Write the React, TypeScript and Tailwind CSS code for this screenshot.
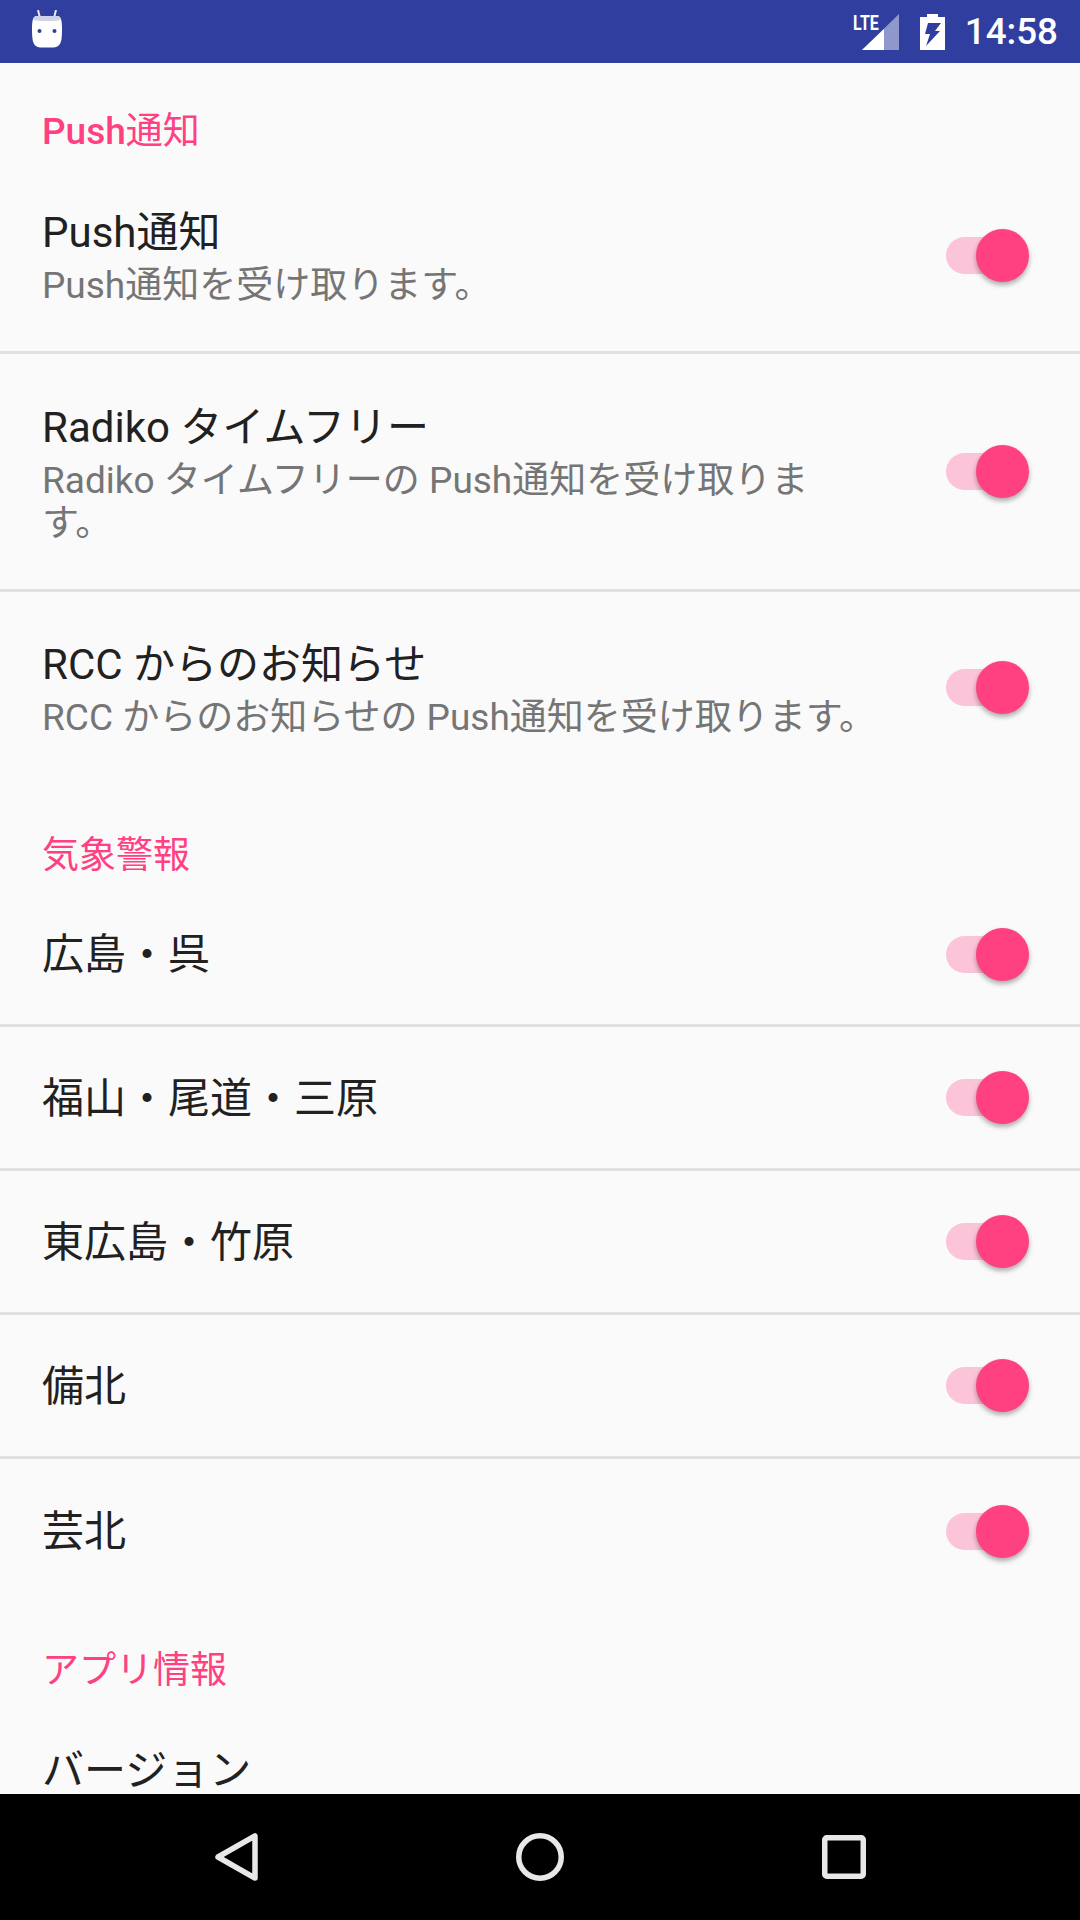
import type { ReactNode } from "react";

const FONT = "font-['Roboto','Noto_Sans_CJK_JP',sans-serif]";

function Toggle() {
  return (
    <div className="relative h-[37px] w-[83px] shrink-0">
      <div className="absolute left-0 top-0 h-[37px] w-[66px] rounded-full bg-[#fbc4d8]" />
      <div className="absolute left-[30px] top-[-8px] h-[53px] w-[53px] rounded-full bg-[#ff4081] shadow-[0_3px_5px_rgba(0,0,0,0.32)]" />
    </div>
  );
}

function SectionHeader({ children, className }: { children: ReactNode; className: string }) {
  return <div className={`pl-[42px] text-[37px] leading-[44px] text-[#ff4081] ${className}`}>{children}</div>;
}

function Row({
  title,
  summary,
  className,
  divider = true,
}: {
  title: string;
  summary?: ReactNode;
  className: string;
  divider?: boolean;
}) {
  return (
    <div className={`flex items-center pl-[42px] pr-[51px] ${divider ? "border-b-[3px] border-[#e1e1e1]" : ""} ${className}`}>
      <div className="min-w-0 flex-1 pt-[2px]">
        <div className="text-[42px] leading-[54px] text-[#212121]">{title}</div>
        {summary && <div className="mt-[4px] text-[37px] leading-[43px] text-[#757575]">{summary}</div>}
      </div>
      <Toggle />
    </div>
  );
}

function StatusBar() {
  return (
    <div className="flex h-[63px] shrink-0 items-center bg-[#303f9f] pl-[32px] pr-[22px]">
      <svg width="30" height="38" viewBox="0 0 30 38" className="mb-[6px]">
        <path d="M6 0l2 8M24 0l-2 8" stroke="#e8e9f4" strokeWidth="2" />
        <path d="M5 6h20c3 0 4 2 4.500 5 .7 4 .7 12 0 18-.5 5-3 8-8 8.500H8.500c-5-.5-7.500-3.500-8-8.500-.7-6-.7-14 0-18C1 8 2 6 5 6z" fill="#fff" />
        <path d="M5 6h20c2 0 3 1 4 3.500-2 2-26 2-28 0C2 7 3 6 5 6z" fill="#cfd2e8" />
        <circle cx="7.500" cy="21" r="2" fill="#303f9f" />
        <circle cx="22.500" cy="21" r="2" fill="#303f9f" />
      </svg>
      <div className="flex-1" />
      <div className="relative h-[36px] w-[37px]">
        <svg width="37" height="36" viewBox="0 0 37 36" className="block">
          <path d="M0 36L37 0v36z" fill="#8f98cd" />
          <path d="M0 36L22 15v21z" fill="#fff" />
        </svg>
        <span className="absolute left-[-9px] top-[-1px] origin-left scale-x-[0.8] text-[20px] font-bold leading-[20px] text-white">LTE</span>
      </div>
      <svg width="25" height="36" viewBox="0 0 25 36" className="ml-[21px]">
        <path d="M7 0h11v3h7v33H0V3h7z" fill="#fff" />
        <path d="M8 9h13l-6 8h5L6 32l4-12H5z" fill="#303f9f" />
      </svg>
      <span className="ml-[20px] text-[36.750px] font-medium leading-[44px] text-white">14:58</span>
    </div>
  );
}

function NavBar() {
  return (
    <div className="flex h-[126px] shrink-0 items-center bg-black pl-[215px] pr-[214px]">
      <div className="flex w-full items-center justify-between">
        <svg width="43" height="48" viewBox="0 0 43 48">
          <path d="M40 3v42L3 24z" fill="none" stroke="#e8e8e8" strokeWidth="5.500" strokeLinejoin="round" />
        </svg>
        <svg width="48" height="48" viewBox="0 0 48 48">
          <circle cx="24" cy="24" r="21.250" fill="none" stroke="#e8e8e8" strokeWidth="5.500" />
        </svg>
        <svg width="44" height="44" viewBox="0 0 44 44">
          <rect x="2.750" y="2.750" width="38.500" height="38.500" rx="2" fill="none" stroke="#e8e8e8" strokeWidth="5.500" />
        </svg>
      </div>
    </div>
  );
}

export default function App() {
  return (
    <div className={`relative flex h-[1920px] w-[1080px] flex-col overflow-hidden bg-[#fafafa] ${FONT}`}>
      <StatusBar />
      <div className="min-h-0 flex-1 overflow-hidden">
        <SectionHeader className="pt-[47px]">
          <span className="font-medium">Push</span>通知
        </SectionHeader>
        <Row title="Push通知" summary="Push通知を受け取ります。" className="h-[200px] pt-[6px]" />
        <Row
          title="Radiko タイムフリー"
          summary={
            <>
              Radiko タイムフリーの Push通知を受け取りま
              <br />
              す。
            </>
          }
          className="h-[238px]"
        />
        <Row title="RCC からのお知らせ" summary="RCC からのお知らせの Push通知を受け取ります。" className="h-[191px]" divider={false} />
        <SectionHeader className="pt-[51px]">気象警報</SectionHeader>
        <Row title="広島・呉" className="mt-[6px] h-[143px]" />
        <Row title="福山・尾道・三原" className="h-[144px]" />
        <Row title="東広島・竹原" className="h-[144px]" />
        <Row title="備北" className="h-[144px]" />
        <Row title="芸北" className="h-[144px]" divider={false} />
        <SectionHeader className="pt-[46px]">アプリ情報</SectionHeader>
        <div className="mt-[51px] pl-[42px] text-[42px] leading-[54px] text-[#212121]">バージョン</div>
      </div>
      <NavBar />
    </div>
  );
}
